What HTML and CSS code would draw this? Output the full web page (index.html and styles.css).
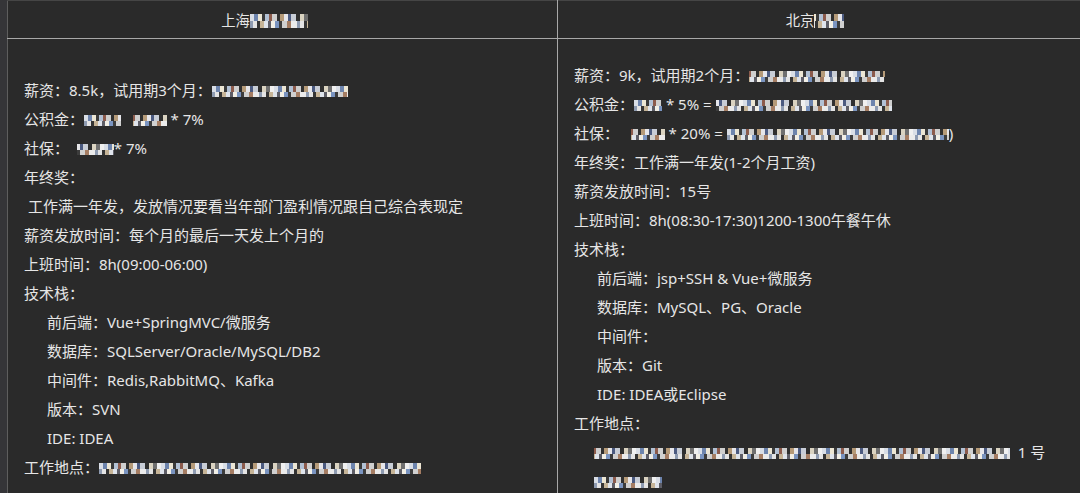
FILE: index.html
```html
<!DOCTYPE html>
<html lang="zh">
<head>
<meta charset="utf-8">
<link rel="stylesheet" href="styles.css">
</head>
<body>
<div class="page">
  <table class="cmp">
    <colgroup>
      <col class="c-left">
      <col class="c-right">
    </colgroup>
    <thead>
      <tr>
        <th class="h-left">上海<span class="px px-h1"></span></th>
        <th class="h-right">北京<span class="px px-h2"></span></th>
      </tr>
    </thead>
    <tbody>
      <tr>
        <td>
          <div class="ln">薪资：8.5k，试用期3个月：<span class="px w136"></span></div>
          <div class="ln">公积金：<span class="px w36"></span>&nbsp;&nbsp;&nbsp;<span class="px w34 alt"></span> * 7%</div>
          <div class="ln">社保：&nbsp;&nbsp;<span class="px w36 alt2"></span>* 7%</div>
          <div class="ln">年终奖：</div>
          <div class="ln">&nbsp;工作满一年发，发放情况要看当年部门盈利情况跟自己综合表现定</div>
          <div class="ln">薪资发放时间：每个月的最后一天发上个月的</div>
          <div class="ln">上班时间：8h(09:00-06:00)</div>
          <div class="ln">技术栈：</div>
          <div class="ln ind">前后端：Vue+SpringMVC/微服务</div>
          <div class="ln ind">数据库：SQLServer/Oracle/MySQL/DB2</div>
          <div class="ln ind">中间件：Redis,RabbitMQ、Kafka</div>
          <div class="ln ind">版本：SVN</div>
          <div class="ln ind">IDE: IDEA</div>
          <div class="ln">工作地点：<span class="px w322"></span></div>
        </td>
        <td>
          <div class="ln">薪资：9k，试用期2个月：<span class="px w136 alt"></span></div>
          <div class="ln">公积金：<span class="px w28"></span> * 5% = <span class="px w176 alt2"></span></div>
          <div class="ln">社保：&nbsp;&nbsp;&nbsp;<span class="px w34 alt"></span> * 20% = <span class="px w222"></span>)</div>
          <div class="ln">年终奖：工作满一年发(1-2个月工资)</div>
          <div class="ln">薪资发放时间：15号</div>
          <div class="ln">上班时间：8h(08:30-17:30)1200-1300午餐午休</div>
          <div class="ln">技术栈：</div>
          <div class="ln ind">前后端：jsp+SSH &amp; Vue+微服务</div>
          <div class="ln ind">数据库：MySQL、PG、Oracle</div>
          <div class="ln ind">中间件：</div>
          <div class="ln ind">版本：Git</div>
          <div class="ln ind">IDE: IDEA或Eclipse</div>
          <div class="ln">工作地点：</div>
          <div class="ln ind2"><span class="px w416 alt"></span>&nbsp;&nbsp;1 号</div>
          <div class="ln ind2"><span class="px w68"></span></div>
        </td>
      </tr>
    </tbody>
  </table>
</div>
</body>
</html>
```

FILE: styles.css
```css
html, body {
  margin: 0;
  padding: 0;
  height: 100%;
}
body {
  background: linear-gradient(90deg, #353538 0 7px, #2a2a2a 7px);
  font-family: "Noto Sans", "Noto Sans CJK SC", sans-serif;
  font-size: 15px;
  color: #e6e6e6;
  overflow: hidden;
}
.page {
  padding-left: 7px;
}
.cmp {
  border-collapse: collapse;
  width: 1081px;
  table-layout: fixed;
  background: #2a2a2a;
}
.c-left { width: 550px; }
.cmp th {
  font-weight: normal;
  font-size: 14.3px;
  height: 37px;
  padding: 0;
  text-align: center;
  border-top: 1px solid #454545;
  border-bottom: 1px solid #a8a8a8;
  vertical-align: middle;
}
.cmp th.h-left {
  padding-right: 36px;
  border-left: 1px solid #5e5e5e;
  border-right: 1px solid #a8a8a8;
}
.cmp th.h-right {
  padding-right: 16px;
}
.cmp td {
  vertical-align: middle;
  padding: 22px 10px 22px 16px;
  border-left: 1px solid #5e5e5e;
}
.cmp td + td {
  border-left: 1px solid #a8a8a8;
}
.ln {
  line-height: 29px;
  height: 29px;
  white-space: nowrap;
}
.ind { padding-left: 23px; }
.ind2 { padding-left: 20px; }

.px {
  display: inline-block;
  height: 11px;
  vertical-align: -1px;
  background-color: #3a3a3a;
  background-image:
    linear-gradient(90deg, #d9dee6 0 4px, #6d84ad 4px 8px, #ece6d4 8px 12px, #3a3a3a 12px 15px, #b2c1d4 15px 19px, #8c5b4c 19px 22px, #cfcfcf 22px 27px, #2f2f2f 27px 30px, #b59a78 30px 34px, #e6e6ea 34px 38px, #4b5a80 38px 41px, #c8cdd6 41px 46px, #2e2e2e 46px 50px, #dad3c1 50px 54px, #6f6f6f 54px 58px, #f0f0f0 58px 62px),
    linear-gradient(90deg, #8e9bb1 0 3px, #e4e4e4 3px 7px, #343434 7px 10px, #c6b497 10px 14px, #dfe4ec 14px 18px, #5d5d66 18px 21px, #f2efe6 21px 25px, #7a94c0 25px 29px, #3c3c3c 29px 32px, #d0d0d0 32px 37px, #a57d63 37px 41px, #ebebeb 41px 47px);
  background-size: 62px 6px, 47px 5px;
  background-position: 0 0, 0 100%;
  background-repeat: repeat-x;
}
.px.alt {
  background-position: -20px 0, -13px 100%;
}
.px.alt2 {
  background-position: -35px 0, -29px 100%;
}
.px-h1 { width: 58px; height: 14px; vertical-align: -2px; background-size: 62px 7px, 47px 7px; }
.px-h2 { width: 30px; height: 14px; vertical-align: -2px; background-size: 62px 7px, 47px 7px; background-position: -10px 0, -6px 100%; }
.w28 { width: 28px; }
.w34 { width: 34px; }
.w36 { width: 37px; }
.w68 { width: 68px; }
.w136 { width: 136px; }
.w176 { width: 176px; }
.w222 { width: 222px; }
.w322 { width: 322px; }
.w416 { width: 416px; }
```
